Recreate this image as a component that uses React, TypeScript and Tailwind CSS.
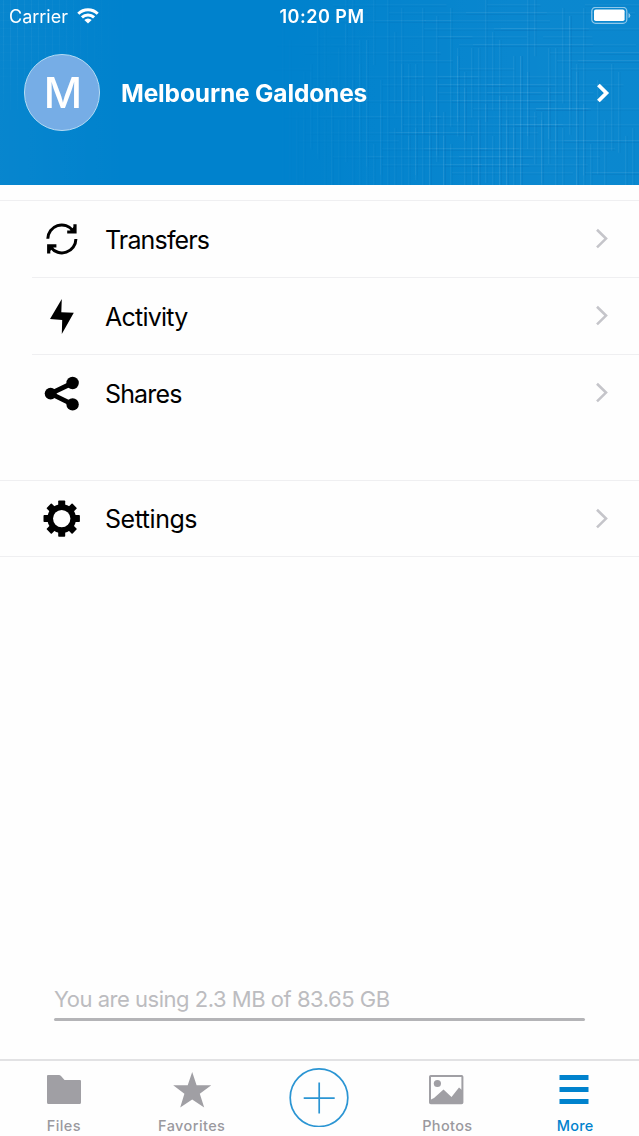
import React, { type ReactNode } from 'react'
import clsx from 'clsx'

interface MenuItem {
  label: string;
  icon: ReactNode;
  textClass: string;
}

// fixed seed so the header weave is the same on each load
let seed = 11
const rand = () => {
  seed = (seed * 16807) % 2147483647
  return seed / 2147483647
}

const columns = Array.from({ length: 95 }, (_, i) => {
  const y = Math.round((rand() * 150) / 8) * 8 - 8
  return { x: 282 + (i % 51) * 7, y, w: 1, h: 50 + rand() * 120 }
})

const rows = Array.from({ length: 66 }, (_, i) => {
  const x = 270 + Math.round((rand() * 330) / 7) * 7
  return { x, y: 4 + (i % 22) * 8, w: 40 + rand() * 130, h: 1 }
})

const HeaderTexture = () => (
  <svg className="absolute inset-0" width="639" height="185" viewBox="0 0 639 185">
    <defs>
      <linearGradient id="fade" x1="0" x2="1" y1="0" y2="0">
        <stop offset="0" stopColor="#fff" stopOpacity="0.03" />
        <stop offset="0.2" stopColor="#fff" stopOpacity="0" />
        <stop offset="0.45" stopColor="#fff" stopOpacity="0" />
        <stop offset="0.85" stopColor="#fff" stopOpacity="0.045" />
      </linearGradient>
      <linearGradient id="weaveFade" x1="0" x2="1" y1="0" y2="0">
        <stop offset="0.42" stopColor="#000" />
        <stop offset="0.7" stopColor="#fff" />
      </linearGradient>
      <mask id="weaveMask">
        <rect width="639" height="185" fill="url(#weaveFade)" />
      </mask>
      <pattern id="grid" width="7" height="8" patternUnits="userSpaceOnUse">
        <path d="M3.5 0V8" stroke="#fff" strokeOpacity="0.05" />
        <path d="M0 4.5H7" stroke="#fff" strokeOpacity="0.02" />
      </pattern>
      <radialGradient id="cornerFade" cx="0" cy="0.2" r="1">
        <stop offset="0" stopColor="#fff" />
        <stop offset="1" stopColor="#000" />
      </radialGradient>
      <mask id="corner">
        <rect width="130" height="110" fill="url(#cornerFade)" />
      </mask>
    </defs>
    <rect width="639" height="185" fill="url(#fade)" />
    <rect width="130" height="110" fill="url(#grid)" mask="url(#corner)" />
    <g mask="url(#weaveMask)">
      {columns.map((l, i) => (
        <g key={i}>
          <rect x={l.x} y={l.y} width={l.w} height={l.h} fill="#fff" opacity="0.05" />
          <rect x={l.x + 2} y={l.y} width={l.w} height={l.h} fill="#004f9c" opacity="0.06" />
        </g>
      ))}
      {rows.map((l, i) => (
        <g key={i}>
          <rect x={l.x} y={l.y} width={l.w} height={l.h} fill="#fff" opacity="0.04" />
          <rect x={l.x} y={l.y + 2} width={l.w} height={l.h} fill="#004f9c" opacity="0.06" />
        </g>
      ))}
    </g>
  </svg>
)

const TransfersIcon = () => (
  <svg width="40" height="40" viewBox="0 0 40 40" fill="none" stroke="#000" strokeWidth="3">
    <path d="M5.8 19.8A14 14 0 0 1 31 11.6" />
    <path d="M33.9 20A14 14 0 0 1 8.8 28.4" />
    <path d="M33 5.3V13H25.2" strokeWidth="3.2" />
    <path d="M6.7 34.6V26.8H14.4" strokeWidth="3.2" />
    <path d="M27 13L32.5 7V13ZM12.8 27L7.2 33V27Z" fill="#000" stroke="none" />
  </svg>
)

const ActivityIcon = () => (
  <svg width="40" height="40" viewBox="0 0 40 40">
    <path d="M19.8 3L8 23.1L20.2 24L19.8 38L31.8 16.8L19.3 16.3Z" fill="#000" />
  </svg>
)

const SharesIcon = () => (
  <svg width="40" height="40" viewBox="0 0 40 40">
    <path d="M30.6 10L8.6 20.6L30.6 31.4" fill="none" stroke="#000" strokeWidth="4.8" />
    <circle cx="8.6" cy="20.6" r="5.9" />
    <circle cx="30.6" cy="10" r="6.2" />
    <circle cx="30.6" cy="31.4" r="6.2" />
  </svg>
)

const SettingsIcon = () => (
  <svg width="40" height="40" viewBox="0 0 40 40">
    {[0, 45, 90, 135].map((a) => (
      <rect key={a} x="16.2" y="1.4" width="7" height="36.4" rx="0.8" transform={`rotate(${a} 19.7 19.6)`} />
    ))}
    <circle cx="19.7" cy="19.6" r="14.4" />
    <circle cx="19.7" cy="19.6" r="8.7" fill="#fefefe" />
  </svg>
)

const Chevron = ({ bold }: { bold?: boolean }) => (
  <svg width="14" height="22" viewBox="0 0 14 22" fill="none" stroke={bold ? '#fff' : '#c5c5ca'} strokeWidth={bold ? 3.8 : 2.6}>
    {bold ? <path d="M2.4 3L10.4 11L2.4 19" /> : <path d="M2 1.8L11 10.6L2 19.4" />}
  </svg>
)

const items: MenuItem[] = [
  { label: 'Transfers', icon: <TransfersIcon />, textClass: 'pt-[2px] tracking-[-0.85px]' },
  { label: 'Activity', icon: <ActivityIcon />, textClass: 'pt-[2px] tracking-[-0.75px]' },
  { label: 'Shares', icon: <SharesIcon />, textClass: 'pt-[2px] tracking-[-0.85px]' },
]

const MenuRow = ({ item, inset, last }: { item: MenuItem; inset?: boolean; last?: boolean }) => (
  <div className={clsx('flex items-center pr-[30px] border-t border-[#efeff1] cursor-pointer', last ? 'h-[76px]' : 'h-[77px]', inset ? 'ml-8 pl-[10px]' : 'pl-[42px]')}>
    {item.icon}
    <span className={clsx('ml-[23px] flex-1 text-[25px] leading-8 text-black', item.textClass)}>{item.label}</span>
    <Chevron />
  </div>
)

const Tab = ({ label, children, active, textClass }: { label: string; children: ReactNode; active?: boolean; textClass: string }) => (
  <div className={clsx('flex flex-1 flex-col items-center pt-[9px]', active ? 'text-[#0082cd]' : 'text-[#a09fa4]')}>
    {children}
    <span className={clsx('mt-[5px] text-[14.5px] leading-5 font-medium', textClass, !active && 'text-[#9a999e]')}>{label}</span>
  </div>
)

const App = () => {
  return (
    <div className="flex flex-col w-[639px] h-[1136px] overflow-hidden bg-[#fefefe] font-['Inter',sans-serif]">
      <header className="relative h-[185px] bg-[#0082cd] text-white">
        <HeaderTexture />

        {/* Status bar */}
        <div className="relative grid grid-cols-3 items-center h-8 pl-[9px]">
          <div className="flex items-center gap-[9px]">
            <span className="pt-px text-[18px] leading-6 tracking-[0px]">Carrier</span>
            <svg width="22" height="16" viewBox="0 0 22 16" fill="none" stroke="#fff" strokeWidth="3">
              <path d="M1.3 5.7A13.8 13.8 0 0 1 20.7 5.7" />
              <path d="M4.9 9.4A8.8 8.8 0 0 1 17.1 9.4" />
              <path d="M11 15.6L7.3 11.9A5.3 5.3 0 0 1 14.7 11.9Z" fill="#fff" stroke="none" />
            </svg>
          </div>
          <span className="pt-px text-center -ml-[4px] text-[18px] leading-6 font-semibold tracking-[0.5px]">10:20 PM</span>
          <svg className="justify-self-end mr-[7px]" width="41" height="18" viewBox="0 0 41 18">
            <rect x="0.8" y="0.3" width="35" height="16" rx="3.8" fill="none" stroke="#8fc8ea" strokeWidth="1.2" />
            <rect x="3" y="2.5" width="30.6" height="11.6" rx="1.8" fill="#fff" />
            <path d="M37.5 6Q39.3 6.5 39.3 8.5T37.5 11Z" fill="#8fc8ea" />
          </svg>
        </div>

        {/* Account */}
        <div className="relative flex items-center pt-[22px] pl-6 pr-[29px]">
          <div className="flex items-center justify-center w-[76px] h-[77px] rounded-full border border-[#b5dbf3] bg-[#76ade6] text-[42px] font-medium pl-[2px]">M</div>
          <span className="ml-[21px] pt-px flex-1 text-[24.5px] leading-8 font-bold tracking-[-0.15px]">Melbourne Galdones</span>
          <Chevron bold />
        </div>
      </header>

      <main className="flex flex-col flex-1">
        <div className="mt-[15px]">
          {items.map((item, i) => (
            <MenuRow key={item.label} item={item} inset={i > 0} />
          ))}
        </div>
        <div className="mt-[49px] border-b border-[#efeff1]">
          <MenuRow last item={{ label: 'Settings', icon: <SettingsIcon />, textClass: 'tracking-[-0.45px]' }} />
        </div>

        {/* Quota */}
        <div className="mt-auto mb-[38px] mx-[54px]">
          <p className="text-[22px] leading-7 tracking-[-0.48px] text-[#bcbcc0]">You are using 2.3 MB of 83.65 GB</p>
          <div className="mt-[5px] h-[3px] rounded-full bg-[#b4b4b7]" />
        </div>
      </main>

      <nav className="flex h-[77px] border-t-2 border-[#e2e2e4]">
        <Tab label="Files" textClass="tracking-[0.4px]">
          <svg className="mt-[5px]" width="36" height="36" viewBox="0 0 36 36" fill="currentColor">
            <path d="M2 0H13Q14 0 15 1L18.5 5H34Q35 5 35 6V27.5Q35 29 33.5 29H2.5Q1 29 1 27.5V1Q1 0 2 0Z" />
          </svg>
        </Tab>
        <Tab label="Favorites" textClass="tracking-[0.4px]">
          <svg className="mt-[5px] overflow-visible" width="40" height="36" viewBox="0 0 40 36" fill="currentColor">
            <path d="M20.2 -3L24.6 10.3H39.3L27.8 18.7L32.2 32.5L20.2 24.5L8.2 32.5L12.4 18.7L1.2 10.3H15.7Z" />
          </svg>
        </Tab>
        <div className="flex flex-1 justify-center pt-[6px]">
          <svg width="60" height="60" viewBox="0 0 60 60" fill="none" stroke="#2b95d3" strokeWidth="1.7">
            <circle cx="30" cy="30.7" r="28.8" />
            <path d="M30.2 15.5V46.5M14.7 31.2H45.7" />
          </svg>
        </div>
        <Tab label="Photos" textClass="tracking-[0.35px]">
          <svg className="mt-[5px] -ml-[2px]" width="36" height="36" viewBox="0 0 36 36">
            <rect x="2" y="1" width="32.4" height="27.3" rx="0.8" fill="none" stroke="currentColor" strokeWidth="2" />
            <circle cx="9.4" cy="8.5" r="3.6" fill="currentColor" />
            <path d="M2 25L6 23L15.5 14.5L23.5 22L31 12.5L34 15V28H2Z" fill="currentColor" />
          </svg>
        </Tab>
        <Tab label="More" active textClass="tracking-[0.2px]">
          <svg className="mt-[5px] -ml-[2px]" width="36" height="36" viewBox="0 0 36 36" fill="currentColor">
            <path d="M3.5 0H32.5V5H3.5ZM3.5 12H32.5V17H3.5ZM3.5 24H32.5V29H3.5Z" />
          </svg>
        </Tab>
      </nav>
    </div>
  )
}

export default App
